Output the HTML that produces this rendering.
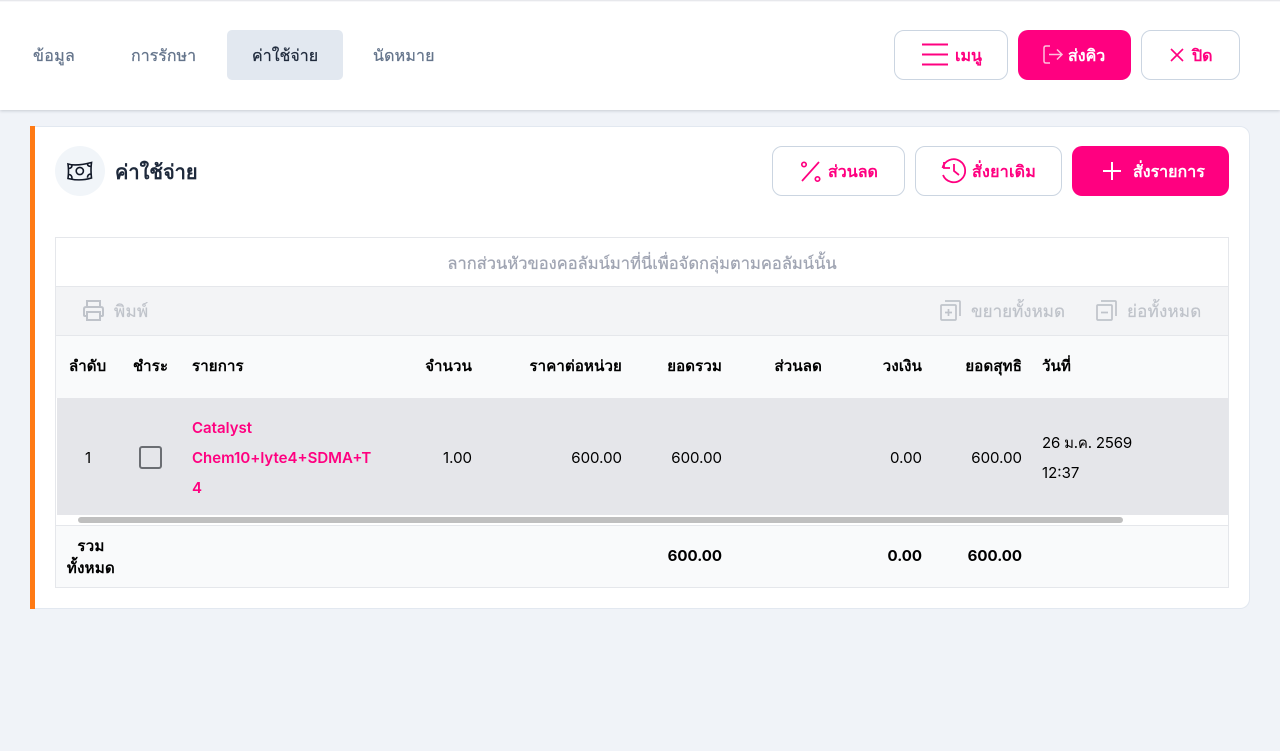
<!DOCTYPE html>
<html><head><meta charset="utf-8"><title>ค่าใช้จ่าย</title>
<style>
*{box-sizing:border-box}
html,body{margin:0;padding:0}
body{width:1280px;height:751px;position:relative;overflow:hidden;background:#f0f3f8;font-family:"Inter","Liberation Sans",sans-serif;color:#000}
.a{position:absolute;white-space:nowrap}
.box{position:absolute;border-radius:10px;background:#fff;border:1px solid #cbd5e1}
.pk{color:#ff0080}
.t{font-size:16px;font-weight:500;line-height:20px;height:20px;-webkit-text-stroke:.25px}
.tb{font-size:17px;font-weight:500;line-height:20px;height:20px;-webkit-text-stroke:.2px}
.b{font-size:16px;font-weight:600;line-height:20px;height:20px}
.th{font-size:15px;font-weight:700;line-height:20px;height:20px;top:356px;letter-spacing:.15px}
.td{font-size:15px;line-height:20px;height:20px}
.f{font-size:15px;font-weight:700;line-height:20px;height:20px;top:546px;text-align:right}
.r{text-align:right}
svg{position:absolute;overflow:visible}
</style></head><body>
<div class="a" style="left:0;top:0;width:1280px;height:110px;background:#fff;box-shadow:0 1px 3px rgba(15,23,42,.18)"></div>
<div class="a" style="left:0;top:0;width:1280px;height:2px;background:linear-gradient(#dfe1e5,#fff)"></div>
<div class="a t" style="left:33px;top:45px;color:#64748b;letter-spacing:.3px">ข้อมูล</div>
<div class="a t" style="left:131px;top:45px;color:#64748b">การรักษา</div>
<div class="a" style="left:227px;top:30px;width:116px;height:50px;background:#e2e8f0;border-radius:5px"></div>
<div class="a t" style="left:252px;top:45px;color:#1e293b">ค่าใช้จ่าย</div>
<div class="a t" style="left:373px;top:45px;color:#64748b;letter-spacing:.15px">นัดหมาย</div>

<div class="box" style="left:894px;top:30px;width:114px;height:50px"></div>
<svg style="left:922px;top:43px" width="26" height="24" fill="none" stroke="#ff0080" stroke-width="2"><path d="M0 1.500H26M0 11.500H26M0 21.500H26"/></svg>
<div class="a b pk" style="left:955px;top:45px">เมนู</div>
<div class="a" style="left:1018px;top:30px;width:113px;height:50px;background:#ff0080;border-radius:10px"></div>
<svg style="left:1043px;top:45px" width="20" height="20" fill="none" stroke="#ffc0dd" stroke-width="1.500"><path d="M7 1H3Q1 1 1 3V16Q1 18 3 18H7M6 9.500H19M14 4.500L19 9.500L14 14.500"/></svg>
<div class="a b" style="left:1068px;top:45px;color:#fff">ส่งคิว</div>
<div class="box" style="left:1141px;top:30px;width:99px;height:50px"></div>
<svg style="left:1171px;top:49px" width="12" height="12" fill="none" stroke="#ff0080" stroke-width="1.600"><path d="M0 0L12 12M12 0L0 12"/></svg>
<div class="a b pk" style="left:1192px;top:45px">ปิด</div>

<div class="a" style="left:30px;top:126px;width:1220px;height:483px;background:#fff;border:1px solid #e2e8f0;border-left:0;border-radius:0 10px 10px 0"></div>
<div class="a" style="left:30px;top:126px;width:5px;height:483px;background:#ff7a14"></div>
<div class="a" style="left:55px;top:146px;width:50px;height:50px;border-radius:50%;background:#f1f5f9"></div>
<svg style="left:67px;top:161px" width="26" height="20" fill="none" stroke="#111827" stroke-width="1.600"><path d="M1 3Q9 5.500 24.500 1.500Q23.500 9 24.500 17Q13 20.500 1 17.500Q2 10 1 3Z"/><circle cx="12.800" cy="10" r="3.600"/><path d="M1.500 7.500Q5 7.500 5 4M24 5.500Q20.500 5.500 20.500 2.800M1.500 13.500Q5 13.500 5 17.500M24 13Q20.500 13 20.500 16.800"/></svg>
<div class="a" style="left:115px;top:160px;font-size:20px;font-weight:700;line-height:24px;color:#1e293b">ค่าใช้จ่าย</div>

<div class="box" style="left:772px;top:146px;width:133px;height:50px"></div>
<svg style="left:800px;top:161px" width="22" height="22" fill="none" stroke="#ff0080" stroke-width="1.700"><path d="M19 1L2 20"/><circle cx="4" cy="3.500" r="2.200"/><circle cx="17.500" cy="18" r="2.200"/></svg>
<div class="a b pk" style="left:828px;top:161px">ส่วนลด</div>
<div class="box" style="left:915px;top:146px;width:147px;height:50px"></div>
<svg style="left:941px;top:158px" width="26" height="26" fill="none" stroke="#ff0080" stroke-width="1.800"><path d="M3 4V10H9M1.500 10A11.500 11.500 0 1 1 2 17M13 6V13L18 17"/></svg>
<div class="a b pk" style="left:972px;top:161px;letter-spacing:.25px">สั่งยาเดิม</div>
<div class="a" style="left:1072px;top:146px;width:157px;height:50px;background:#ff0080;border-radius:10px"></div>
<svg style="left:1103px;top:162px" width="18" height="18" fill="none" stroke="#fff" stroke-width="2"><path d="M9 0V18M0 9H18"/></svg>
<div class="a b" style="left:1133px;top:161px;color:#fff">สั่งรายการ</div>

<div class="a" style="left:55px;top:237px;width:1174px;height:351px;background:#fff;border:1px solid #e5e7eb"></div>
<div class="a" style="left:56px;top:238px;width:1172px;height:48px;text-align:center;font-size:16.500px;font-weight:500;line-height:50px;color:#9fa4b2;-webkit-text-stroke:.25px">ลากส่วนหัวของคอลัมน์มาที่นี่เพื่อจัดกลุ่มตามคอลัมน์นั้น</div>
<div class="a" style="left:56px;top:286px;width:1172px;height:50px;background:#f3f4f6;border-top:1px solid #e5e7eb;border-bottom:1px solid #e5e7eb"></div>
<svg style="left:83px;top:300px" width="21" height="21" fill="none" stroke="#bfc3ca" stroke-width="2"><path d="M4 7V1H17V7M4 16H2Q1 16 1 15V9Q1 7 3 7H18Q20 7 20 9V15Q20 16 19 16H17M4 12H17V20H4Z"/></svg>
<div class="a tb" style="left:114px;top:302px;color:#bfc3ca;letter-spacing:.3px">พิมพ์</div>
<svg style="left:940px;top:300px" width="21" height="21" fill="none" stroke="#bfc3ca" stroke-width="1.700"><path d="M2 5H15Q16 5 16 6V19Q16 20 15 20H2Q1 20 1 19V6Q1 5 2 5ZM5 1H19Q20 1 20 2V16M8.500 9V16M5 12.500H12"/></svg>
<div class="a tb" style="left:971px;top:302px;color:#bfc3ca">ขยายทั้งหมด</div>
<svg style="left:1096px;top:300px" width="21" height="21" fill="none" stroke="#bfc3ca" stroke-width="1.700"><path d="M2 5H15Q16 5 16 6V19Q16 20 15 20H2Q1 20 1 19V6Q1 5 2 5ZM5 1H19Q20 1 20 2V16M5 12.500H12"/></svg>
<div class="a tb" style="left:1127px;top:302px;color:#bfc3ca;letter-spacing:.2px">ย่อทั้งหมด</div>

<div class="a" style="left:56px;top:336px;width:1172px;height:62px;background:#f9fafb"></div>
<div class="a th" style="left:69px">ลำดับ</div>
<div class="a th" style="left:133px">ชำระ</div>
<div class="a th" style="left:192px">รายการ</div>
<div class="a th r" style="left:372px;width:100px">จำนวน</div>
<div class="a th r" style="left:482px;width:140px">ราคาต่อหน่วย</div>
<div class="a th r" style="left:622px;width:100px">ยอดรวม</div>
<div class="a th r" style="left:722px;width:100px">ส่วนลด</div>
<div class="a th r" style="left:822px;width:100px">วงเงิน</div>
<div class="a th r" style="left:922px;width:100px">ยอดสุทธิ</div>
<div class="a th" style="left:1042px">วันที่</div>

<div class="a" style="left:57px;top:398px;width:1171px;height:117px;background:#e5e6ea"></div>
<div class="a td" style="left:85px;top:448px">1</div>
<div class="a" style="left:139px;top:446px;width:23px;height:23px;border:2px solid #6b6e73;border-radius:3px"></div>
<div class="a td pk" style="left:192px;top:418px;font-weight:600">Catalyst</div>
<div class="a td pk" style="left:192px;top:448px;font-weight:600">Chem10+lyte4+SDMA+T</div>
<div class="a td pk" style="left:192px;top:478px;font-weight:600">4</div>
<div class="a td r" style="left:372px;top:448px;width:100px">1.00</div>
<div class="a td r" style="left:522px;top:448px;width:100px">600.00</div>
<div class="a td r" style="left:622px;top:448px;width:100px">600.00</div>
<div class="a td r" style="left:822px;top:448px;width:100px">0.00</div>
<div class="a td r" style="left:922px;top:448px;width:100px">600.00</div>
<div class="a td" style="left:1042px;top:433px;letter-spacing:-.2px">26 ม.ค. 2569</div>
<div class="a td" style="left:1042px;top:463px">12:37</div>

<div class="a" style="left:78px;top:517px;width:1045px;height:6px;background:#bfbfbf;border-radius:3px"></div>
<div class="a" style="left:56px;top:525px;width:1172px;height:62px;background:#f9fafb;border-top:1px solid #e5e7eb"></div>
<div class="a" style="left:63px;top:535px;width:56px;text-align:center;font-size:15px;font-weight:700;line-height:22px;white-space:normal;letter-spacing:.3px">รวม<br>ทั้งหมด</div>
<div class="a f" style="left:622px;width:100px">600.00</div>
<div class="a f" style="left:822px;width:100px">0.00</div>
<div class="a f" style="left:922px;width:100px">600.00</div>
</body></html>
